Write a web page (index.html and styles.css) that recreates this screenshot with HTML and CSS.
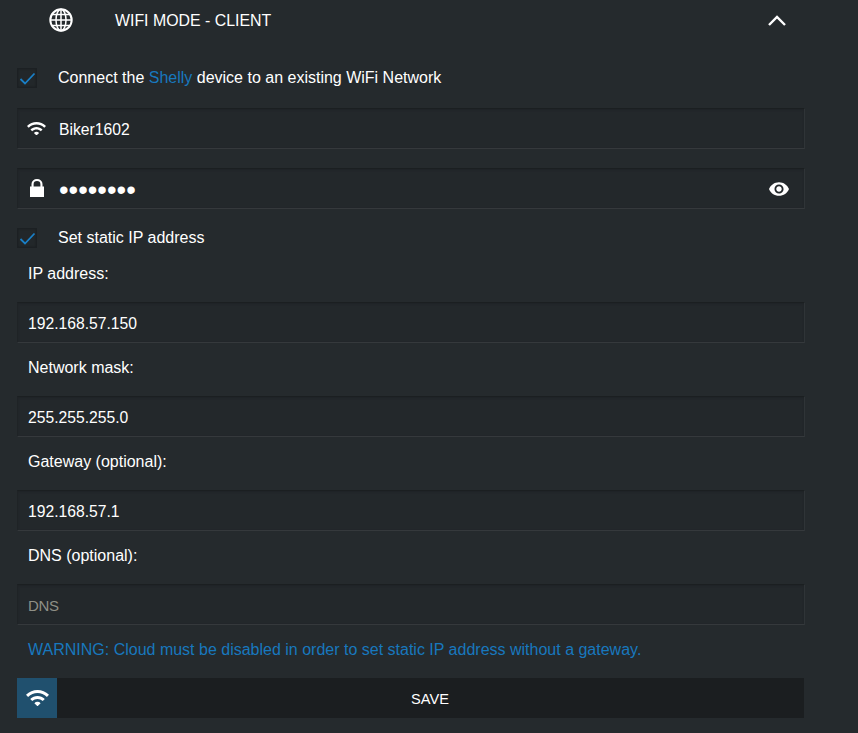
FILE: index.html
```html
<!DOCTYPE html>
<html lang="en">
<head>
<meta charset="utf-8">
<title>WiFi Mode - Client</title>
<link rel="stylesheet" href="styles.css">
</head>
<body>
<main class="panel">
  <header class="head">
    <svg class="globe" viewBox="0 0 24 24" width="24" height="24" fill="none" stroke="#fff" stroke-width="1.5">
      <circle cx="12" cy="12" r="10.7" stroke-width="2"/>
      <ellipse cx="12" cy="12" rx="5" ry="10.7"/>
      <path d="M12 1.4V22.6M1.4 12H22.6M3 6.5H21M3 17.5H21"/>
    </svg>
    <h1 class="title">WIFI MODE - CLIENT</h1>
    <svg class="chev" viewBox="0 0 18 11" width="18" height="11" fill="none" stroke="#fff" stroke-width="2.4"><path d="M1 10L9 2L17 10"/></svg>
  </header>

  <label class="check first">
    <span class="box"><svg viewBox="0 0 20 20" width="20" height="20" fill="none" stroke="#1a7fc6" stroke-width="1.8"><path d="M3.5 11L8 15.5L17.5 5.5"/></svg></span>
    <span>Connect the <span class="blue">Shelly</span> device to an existing WiFi Network</span>
  </label>

  <div class="field">
    <span class="slot"><svg viewBox="1 4.4 22 15.6" width="19" height="13.5"><path fill="#fff" d="M1 9l2 2c4.97-4.97 13.03-4.97 18 0l2-2C16.93 2.93 7.08 2.93 1 9zm8 8l3 3 3-3c-1.65-1.66-4.34-1.66-6 0zm-4-4l2 2c2.76-2.76 7.24-2.76 10 0l2-2C15.14 9.14 8.87 9.14 5 13z"/></svg></span>
    <span class="val">Biker1602</span>
  </div>

  <div class="field gap">
    <span class="slot lock"><svg viewBox="0 0 14 18" width="14" height="18"><path fill="#fff" d="M1.5 7.5V5a5.5 5 0 0 1 11 0v2.5H14V18H0V7.5zM3.6 7.5h6.8V5.2a3.4 3.2 0 0 0-6.8 0z"/></svg></span>
    <span class="val dots">••••••••</span>
    <svg class="eye" viewBox="1 4.5 22 15" width="20" height="14"><path fill="#fff" d="M12 4.5C7 4.5 2.73 7.61 1 12c1.73 4.39 6 7.5 11 7.5s9.27-3.11 11-7.5c-1.73-4.39-6-7.5-11-7.5zM12 17c-2.76 0-5-2.24-5-5s2.24-5 5-5 5 2.24 5 5-2.24 5-5 5zm0-8c-1.66 0-3 1.34-3 3s1.34 3 3 3 3-1.34 3-3-1.34-3-3-3z"/></svg>
  </div>

  <label class="check second">
    <span class="box"><svg viewBox="0 0 20 20" width="20" height="20" fill="none" stroke="#1a7fc6" stroke-width="1.8"><path d="M3.5 11L8 15.5L17.5 5.5"/></svg></span>
    <span>Set static IP address</span>
  </label>

  <div class="lab">IP address:</div>
  <div class="field"><span class="val">192.168.57.150</span></div>
  <div class="lab">Network mask:</div>
  <div class="field"><span class="val">255.255.255.0</span></div>
  <div class="lab">Gateway (optional):</div>
  <div class="field"><span class="val">192.168.57.1</span></div>
  <div class="lab">DNS (optional):</div>
  <div class="field"><span class="val ph">DNS</span></div>

  <p class="warn">WARNING: Cloud must be disabled in order to set static IP address without a gateway.</p>

  <button class="save" type="button">
    <span class="save-ic"><svg viewBox="1 4.4 22 15.6" width="23" height="16.3"><path fill="#fff" d="M1 9l2 2c4.97-4.97 13.03-4.97 18 0l2-2C16.93 2.93 7.08 2.93 1 9zm8 8l3 3 3-3c-1.65-1.66-4.34-1.66-6 0zm-4-4l2 2c2.76-2.76 7.24-2.76 10 0l2-2C15.14 9.14 8.87 9.14 5 13z"/></svg></span>
    <span class="save-t">SAVE</span>
  </button>
</main>
</body>
</html>
```
FILE: styles.css
```css
html, body { margin: 0; padding: 0; background: #252a2d; height: 733px; overflow: hidden; }
body { font-family: "Liberation Sans", Arial, sans-serif; font-size: 16px; color: #fff; }
.panel { width: 788px; margin-left: 17px; }
.head { display: flex; align-items: center; height: 40px; }
.globe { margin-left: 32px; }
.title { margin: 0 0 0 42px; padding-top: 1px; font-size: 15.9px; font-weight: 400; flex: 1; }
.chev { margin-right: 19px; }
.check { display: flex; align-items: center; gap: 21px; height: 20px; }
.first { margin-top: 28px; }
.second { margin-top: 19px; }
.box { width: 20px; height: 20px; background: #22272a; border: 1px solid #1c2023; box-shadow: inset 0 0 2px #181c1e; flex: none; box-sizing: border-box; display: flex; }
.box svg { margin: -1px; }
.blue { color: #1878be; }
.field { height: 41px; box-sizing: border-box; background: #23282b; border-top: 1px solid #1b1f21; border-left: 1px solid #1f2326; border-right: 1px solid #2f3437; border-bottom: 1px solid #35393c; box-shadow: inset 0 1px 2px #1f2326; display: flex; align-items: center; padding-left: 10px; }
.first + .field { margin-top: 20px; }
.gap { margin-top: 19px; }
.slot { width: 19px; flex: none; display: flex; justify-content: center; margin: 0 13px 0 -1px; }
.lock { padding-bottom: 2px; }
.val { flex: 1; font-size: 15.7px; padding-top: 2px; }
.val.dots { font-size: 27.4px; line-height: 1; padding-top: 2px; }
.val.ph { color: #8f8f86; font-size: 15px; letter-spacing: -0.3px; }
.eye { margin-right: 15px; }
.lab { margin-left: 11px; height: 53px; box-sizing: border-box; padding-bottom: 3px; display: flex; align-items: center; }
.second + .lab { margin-top: 1px; }
.warn { margin: 16px 0 0 11px; color: #1878be; line-height: 18px; }
.save { display: flex; align-items: stretch; width: 787px; height: 40px; margin: 19px 0 0; padding: 0; border: 0; background: #1b1e20; color: #fff; font: inherit; }
.save-ic { width: 40px; background: #20506e; display: flex; align-items: center; justify-content: center; flex: none; }
.save-t { flex: 1; display: flex; align-items: center; justify-content: center; font-size: 14.6px; padding: 2px 1px 0 0; }
```
